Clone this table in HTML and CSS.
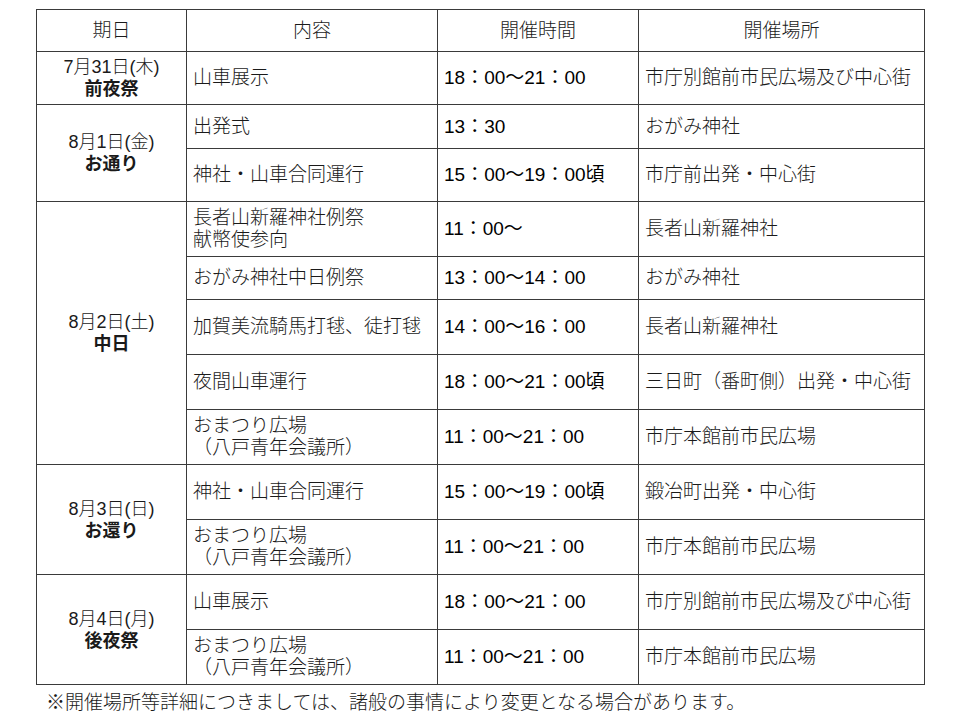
FILE: index.html
```html
<!DOCTYPE html>
<html lang="ja">
<head>
<meta charset="utf-8">
<title>日程</title>
<link rel="stylesheet" href="styles.css">
</head>
<body>
<div class="wrap">
<table class="sched">
  <colgroup>
    <col class="c-date"><col class="c-item"><col class="c-time"><col class="c-place">
  </colgroup>
  <thead>
    <tr class="r-head"><th>期日</th><th>内容</th><th>開催時間</th><th>開催場所</th></tr>
  </thead>
  <tbody>
    <tr class="r-a">
      <td class="date">7月31日(木)<br><b>前夜祭</b></td>
      <td>山車展示</td><td class="time">18：00～21：00</td><td>市庁別館前市民広場及び中心街</td>
    </tr>
    <tr class="r-s">
      <td class="date" rowspan="2">8月1日(金)<br><b>お通り</b></td>
      <td>出発式</td><td class="time">13：30</td><td>おがみ神社</td>
    </tr>
    <tr class="r-a">
      <td>神社・山車合同運行</td><td class="time">15：00～19：00頃</td><td>市庁前出発・中心街</td>
    </tr>
    <tr class="r-b">
      <td class="date" rowspan="5">8月2日(土)<br><b>中日</b></td>
      <td>長者山新羅神社例祭<br>献幣使参向</td><td class="time">11：00～</td><td>長者山新羅神社</td>
    </tr>
    <tr class="r-c">
      <td>おがみ神社中日例祭</td><td class="time">13：00～14：00</td><td>おがみ神社</td>
    </tr>
    <tr class="r-b">
      <td>加賀美流騎馬打毬、徒打毬</td><td class="time">14：00～16：00</td><td>長者山新羅神社</td>
    </tr>
    <tr class="r-b">
      <td>夜間山車運行</td><td class="time">18：00～21：00頃</td><td>三日町（番町側）出発・中心街</td>
    </tr>
    <tr class="r-b">
      <td>おまつり広場<br>（八戸青年会議所）</td><td class="time">11：00～21：00</td><td>市庁本館前市民広場</td>
    </tr>
    <tr class="r-b">
      <td class="date" rowspan="2">8月3日(日)<br><b>お還り</b></td>
      <td>神社・山車合同運行</td><td class="time">15：00～19：00頃</td><td>鍛冶町出発・中心街</td>
    </tr>
    <tr class="r-b">
      <td>おまつり広場<br>（八戸青年会議所）</td><td class="time">11：00～21：00</td><td>市庁本館前市民広場</td>
    </tr>
    <tr class="r-b">
      <td class="date" rowspan="2">8月4日(月)<br><b>後夜祭</b></td>
      <td>山車展示</td><td class="time">18：00～21：00</td><td>市庁別館前市民広場及び中心街</td>
    </tr>
    <tr class="r-b">
      <td>おまつり広場<br>（八戸青年会議所）</td><td class="time">11：00～21：00</td><td>市庁本館前市民広場</td>
    </tr>
  </tbody>
</table>
<p class="note">※開催場所等詳細につきましては、諸般の事情により変更となる場合があります。</p>
</div>
</body>
</html>
```
FILE: styles.css
```css
html, body {
  margin: 0;
  padding: 0;
  background: #ffffff;
}
body {
  font-family: "Liberation Sans", "Noto Sans CJK JP", sans-serif;
  color: #1a1a1a;
  font-weight: 300;
}
.wrap {
  padding: 9px 0 0 36px;
}
.sched {
  border-collapse: collapse;
  table-layout: fixed;
  width: 888px;
  font-size: 19px;
  line-height: 22px;
}
.c-date { width: 150px; }
.c-item { width: 251px; }
.c-time { width: 201px; }
.c-place { width: 286px; }
.sched th,
.sched td {
  border: 1px solid #3a3a3a;
  padding: 0 0 0 6px;
  vertical-align: middle;
  text-align: left;
  white-space: nowrap;
  overflow: hidden;
}
.sched th {
  font-weight: 300;
  text-align: center;
  padding: 0;
}
.sched td.date {
  text-align: center;
  padding: 0;
  font-size: 18px;
}
.sched td.date b {
  font-weight: 700;
}
.sched td.time {
  font-weight: 400;
  color: #000;
}
.r-head { height: 42px; }
.r-a { height: 53px; }
.r-s { height: 44px; }
.r-c { height: 43px; }
.r-b { height: 55px; }
.note {
  margin: 6px 0 0 10px;
  font-size: 19px;
  line-height: 24px;
}
```
